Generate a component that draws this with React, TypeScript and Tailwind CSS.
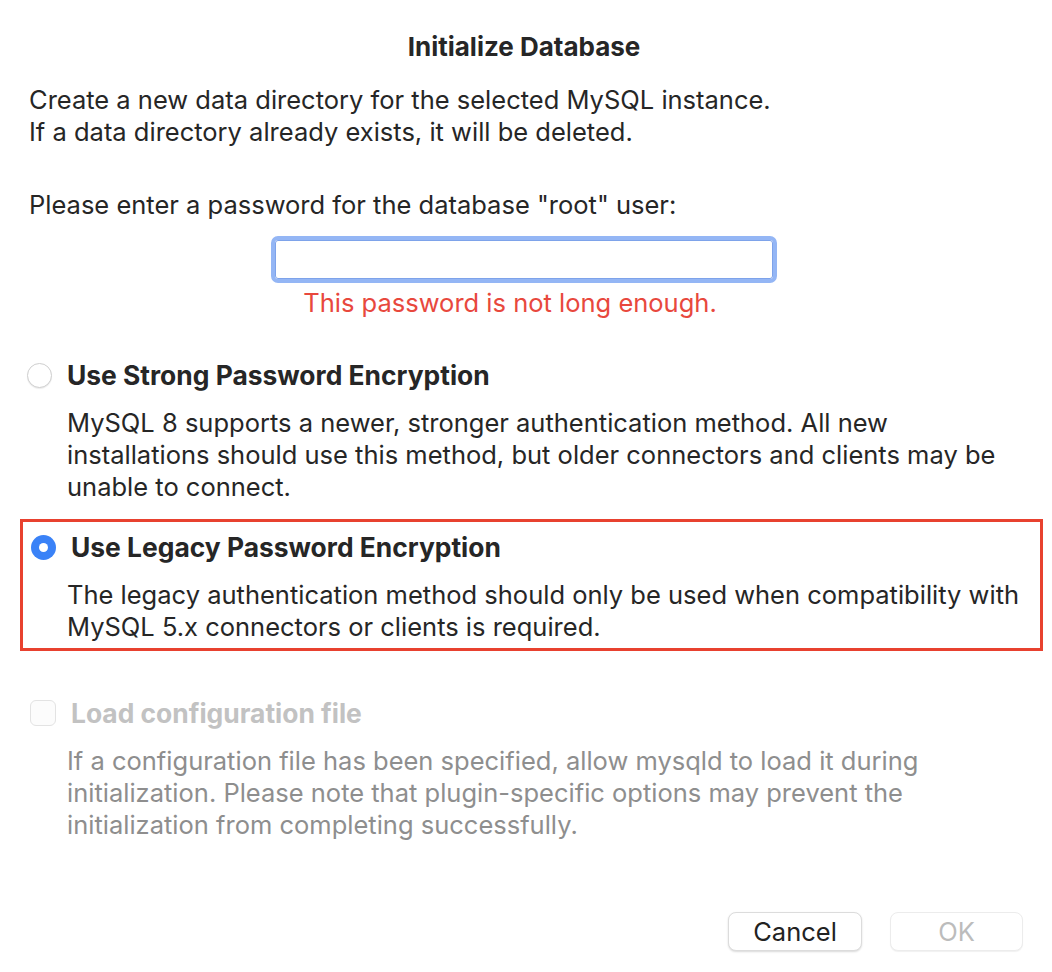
export default function App() {
  return (
    <div
      className="w-[1052px] h-[972px] bg-white text-[#262626] overflow-hidden"
      style={{ fontFamily: "Inter, 'Noto Sans', sans-serif" }}
    >
      <div className="pt-[33px] px-[20px]">
        <h1 className="text-center text-[26px] leading-[28px] font-bold pr-[4px]">
          Initialize Database
        </h1>

        <div className="mt-[23px] pl-[9px] text-[25.5px] leading-[32px]">
          <p>Create a new data directory for the selected MySQL instance.</p>
          <p>If a data directory already exists, it will be deleted.</p>
        </div>

        <p className="mt-[41px] pl-[9px] text-[25.5px] leading-[32px]">
          Please enter a password for the database "root" user:
        </p>

        <div className="mt-[15px] flex flex-col items-start pl-[251px]">
          <div className="w-[506px] h-[47px] rounded-[7px] border-[4px] border-[#94b6f5] bg-white">
            <div className="w-full h-full border border-[#7ea3ea] rounded-[3px]">
              <input className="w-full h-full outline-none bg-transparent px-2 text-[23px]" type="password" />
            </div>
          </div>
        </div>
        <p className="mt-[4px] text-center text-[25.5px] leading-[32px] text-[#e8483d] pr-[32px]">
          This password is not long enough.
        </p>

        <div className="mt-[40px] flex items-center gap-[15px] pl-[7px]">
          <span className="w-[25px] h-[25px] rounded-full border border-[#cfcfcf] bg-white shadow-[0_1px_1px_rgba(0,0,0,0.08)]" />
          <span className="text-[26.4px] leading-[32px] font-bold">Use Strong Password Encryption</span>
        </div>
        <div className="mt-[16px] ml-[47px] w-[960px] text-[25.5px] leading-[32px]">
          MySQL 8 supports a newer, stronger authentication method. All new installations should use this method, but older connectors and clients may be unable to connect.
        </div>

        <div className="mt-[16px] w-[1023px] border-[3px] border-[#e8412f] pt-[9px] pb-[5px]">
          <div className="flex items-center gap-[15px] pl-[8px]">
            <span className="w-[25px] h-[25px] rounded-full bg-[#3a82f7] flex items-center justify-center">
              <span className="w-[9px] h-[9px] rounded-full bg-white" />
            </span>
            <span className="text-[26.4px] leading-[32px] font-bold">Use Legacy Password Encryption</span>
          </div>
          <div className="mt-[16px] ml-[44px] w-[960px] text-[25.5px] leading-[32px]">
            The legacy authentication method should only be used when compatibility with MySQL 5.x connectors or clients is required.
          </div>
        </div>

        <div className="mt-[46px] flex items-center gap-[15px] pl-[10px]">
          <span className="w-[26px] h-[26px] rounded-[6px] border border-[#e3e3e3] bg-[#fcfcfc]" />
          <span className="text-[26.4px] leading-[32px] font-bold text-[#c2c2c2]">Load configuration file</span>
        </div>
        <div className="mt-[16px] ml-[47px] w-[960px] text-[25.5px] leading-[32px] text-[#8e8e8e]">
          If a configuration file has been specified, allow mysqld to load it during initialization. Please note that plugin-specific options may prevent the initialization from completing successfully.
        </div>

        <div className="mt-[71px] flex justify-end gap-[28px] pr-[9px]">
          <button className="w-[134px] h-[39px] rounded-[8px] bg-white border border-[#dcdcdc] shadow-[0_1px_2px_rgba(0,0,0,0.15)] text-[25.5px] text-[#222]">
            Cancel
          </button>
          <button className="w-[133px] h-[39px] rounded-[8px] bg-white border border-[#ececec] shadow-[0_1px_1px_rgba(0,0,0,0.06)] text-[25.5px] text-[#bcbcbc]">
            OK
          </button>
        </div>
      </div>
    </div>
  );
}
